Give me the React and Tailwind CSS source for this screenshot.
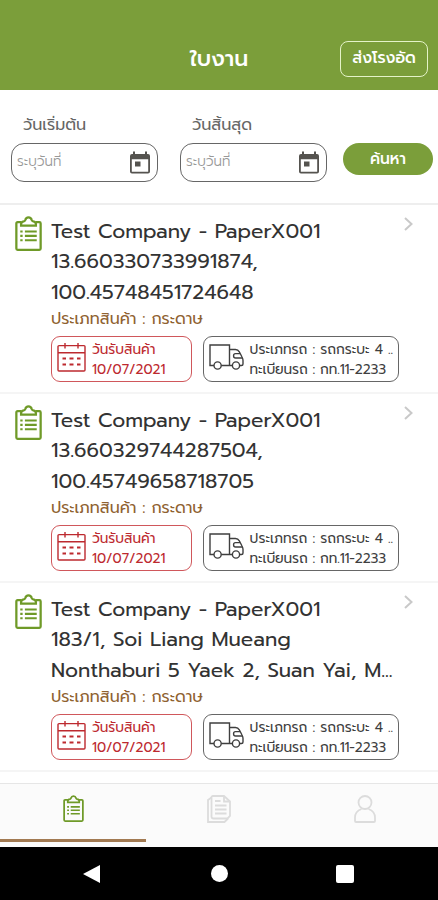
import React from 'react';

const jobs = [
    { id: 1, name: 'Test Company - PaperX001', lines: ['13.660330733991874,', '100.45748451724648'] },
    { id: 2, name: 'Test Company - PaperX001', lines: ['13.660329744287504,', '100.45749658718705'] },
    { id: 3, name: 'Test Company - PaperX001', lines: ['183/1, Soi Liang Mueang', 'Nonthaburi 5 Yaek 2, Suan Yai, M...'] },
];

const ClipboardIcon = ({ className }) => (
    <svg viewBox="0 0 26 34" className={className} fill="none" stroke="currentColor" strokeWidth="2.2">
        <path d="M6 6H2.4Q1.2 6 1.2 7.2V31.6Q1.2 32.8 2.4 32.8H23.6Q24.8 32.8 24.8 31.6V7.2Q24.8 6 23.6 6H20" />
        <path d="M5.8 9.4V8Q5.8 5.6 8.4 5.2Q9.4 5 9.8 4Q10.5 1.4 13 1.4T16.2 4Q16.6 5 17.6 5.2Q20.2 5.6 20.2 8V9.4Z" />
        <path d="M9.5 15H21M9.5 19.3H21M9.5 23.6H21" strokeWidth="2" />
        <path d="M5 15H7.3M5 19.3H7.3M5 23.6H7.3" strokeWidth="2" />
    </svg>
);

const DateIcon = () => (
    <svg viewBox="0 0 20 23" className="h-[23px] w-5 shrink-0" fill="#55534f">
        <path d="M3 0.5H5V3H15V0.5H17V3H18Q20 3 20 5V20.5Q20 22.5 18 22.5H2Q0 22.5 0 20.5V5Q0 3 2 3H3ZM1.8 8.2V20.7H18.2V8.2Z" fillRule="evenodd" />
        <path d="M5 10.5H10.5V15.5H5Z" />
    </svg>
);

const CalendarIcon = () => (
    <svg viewBox="0 0 29 29" className="h-[29px] w-[29px] shrink-0" fill="none" stroke="currentColor" strokeWidth="1.4">
        <rect x="1" y="2.6" width="27" height="25.4" rx="1" />
        <path d="M1 9.8H28M8 0V5.5M21 0V5.5" />
        <path d="M5.5 15.5H9M12.5 15.5H16.5M20 15.5H23.5M5.5 21.5H9M12.5 21.5H16.5M20 21.5H23.5" strokeWidth="1.8" />
    </svg>
);

const TruckIcon = () => (
    <svg viewBox="0 0 35 26" className="h-[26px] w-[35px] shrink-0" fill="none" stroke="currentColor" strokeWidth="1.4">
        <path d="M5 21.5H1V1H20.5V21.5H12.2M20.5 5.5H26.5Q29 5.5 30.3 7.8L33 13Q34 14.8 34 16.5V20Q34 21.5 32.5 21.5H30.8M20.5 21.5H23.2" />
        <path d="M31 9.6H26.5Q24.6 9.6 24.6 11.5V12Q24.6 14 26.5 14H33" />
        <circle cx="8.6" cy="21.5" r="3.6" />
        <circle cx="27" cy="21.5" r="3.6" />
    </svg>
);

const DateField = ({ label }) => (
    <div className="w-[147px]">
        <div className="h-[26px] pl-[12px] text-[16px] leading-[29px] whitespace-nowrap text-[#666]">{label}</div>
        <div className="mt-[6px] flex h-[39px] items-center justify-between rounded-[13px] border border-[#666] pr-[7px] pl-[5px]">
            <span className="text-[13.5px] font-light whitespace-nowrap text-[#999]">ระบุวันที่</span>
            <DateIcon />
        </div>
    </div>
);

const JobItem = ({ job }) => (
    <div className="flex h-[189px] border-b-2 border-[#f5f5f5] pt-[11px] pl-[15px]">
        <ClipboardIcon className="h-[35px] w-[27px] shrink-0 text-[#6f9a28]" />
        <div className="ml-[9px] w-[348px] shrink-0">
            <div className="h-[90px] pt-px text-[20.5px] leading-[30.3px] whitespace-nowrap text-[#333]">
                <div>{job.name}</div>
                {job.lines.map((line) => (
                    <div key={line}>{line}</div>
                ))}
            </div>
            <div className="h-[26px] text-[15.9px] leading-[26px] whitespace-nowrap text-[#8f6231]">ประเภทสินค้า : กระดาษ</div>
            <div className="mt-[4px] flex gap-[11px]">
                <div className="flex h-[46px] w-[141px] rounded-[9px] border border-[#d0575b] pt-[6px] pl-[5px] text-[#bd2a2f]">
                    <CalendarIcon />
                    <div className="-mt-[3px] ml-[6px] text-[13.6px] leading-5 whitespace-nowrap">
                        <div>วันรับสินค้า</div>
                        <div>10/07/2021</div>
                    </div>
                </div>
                <div className="flex h-[46px] w-[197px] rounded-[9px] border border-[#666] pt-[7px] pl-[5px] text-[#3f3f3f]">
                    <TruckIcon />
                    <div className="-mt-[4px] ml-[6px] text-[13.7px] leading-5 whitespace-nowrap">
                        <div>ประเภทรถ : รถกระบะ 4 ..</div>
                        <div className="tracking-[-0.12px]">ทะเบียนรถ : กท.11-2233</div>
                    </div>
                </div>
            </div>
        </div>
        <svg viewBox="0 0 9 14" className="mt-[1px] ml-[5px] h-[14px] w-[9px]" fill="none" stroke="#c9c9c9" strokeWidth="2">
            <path d="M1 1L7.5 7L1 13" />
        </svg>
    </div>
);

const TabBar = () => (
    <div className="h-[64px] shrink-0 border-t border-[#e6e6e6] bg-[#fbfbfb]">
        <div className="grid h-[55px] grid-cols-3 justify-items-center pt-[11px]">
            <ClipboardIcon className="h-[27px] w-[21px] text-[#6f9a28]" />
            <svg viewBox="0 0 24 28" className="h-[28px] w-[24px]" fill="none" stroke="#dcdcdc" strokeWidth="1.8">
                <path d="M6 1H17L23 6.5V21L20.5 23.5H6.5Q4.5 23.5 4.5 21.5V2.5Q4.5 1 6 1Z" />
                <path d="M4.5 2.5L1 5V27H17.5L21 23.5M17 1V6.5H23" />
                <path d="M8 6H13.5M8 10.5H19.5M8 14.5H19.5M8 18.5H19.5" />
            </svg>
            <svg viewBox="0 0 22 28" className="h-[28px] w-[22px]" fill="none" stroke="#dcdcdc" strokeWidth="1.8">
                <circle cx="11" cy="7.5" r="6.5" />
                <path d="M7.5 14Q1 16.5 1 22.5V26Q1 27 2 27H20Q21 27 21 26V22.5Q21 16.5 14.5 14" />
            </svg>
        </div>
        <div className="h-[3px] w-[146px] bg-[#a27a52]" />
    </div>
);

const App = () => {
    return (
        <div className="flex h-[900px] w-[438px] flex-col overflow-hidden bg-white font-['Prompt','Noto_Sans_Thai','Inter',sans-serif]">
            <header className="grid h-[90px] shrink-0 grid-cols-[1fr_auto_1fr] items-start bg-[#7b9e3a] pr-[10px] text-white">
                <div />
                <h1 className="mt-[44px] ml-[10px] text-[22px] leading-[30px] font-medium">ใบงาน</h1>
                <button className="mt-[41px] h-[36px] w-[88px] justify-self-end rounded-[8px] border border-[#e4f3c8] text-[15.7px] font-medium whitespace-nowrap">
                    ส่งโรงอัด
                </button>
            </header>
            <section className="flex h-[115px] shrink-0 border-b-2 border-[#eeeeee] pt-[21px] pl-[11px]">
                <DateField label="วันเริ่มต้น" />
                <div className="w-[22px]" />
                <DateField label="วันสิ้นสุด" />
                <button className="mt-[32px] ml-[16px] h-[32px] w-[90px] rounded-full bg-[#7b9e3a] pt-[2px] text-[15.5px] font-medium text-white">
                    ค้นหา
                </button>
            </section>
            <main className="h-[578px] shrink-0">
                {jobs.map((job) => (
                    <JobItem key={job.id} job={job} />
                ))}
            </main>
            <TabBar />
            <nav className="grid h-[53px] shrink-0 grid-cols-3 items-center bg-black">
                <svg viewBox="0 0 17 18" className="ml-[83px] h-[18px] w-[17px]" fill="white">
                    <path d="M0 9L17 0V18Z" />
                </svg>
                <div className="h-[17px] w-[17px] justify-self-center rounded-full bg-white" />
                <div className="ml-[44px] h-[18px] w-[18px] rounded-[2px] bg-white" />
            </nav>
        </div>
    );
};

export default App;
